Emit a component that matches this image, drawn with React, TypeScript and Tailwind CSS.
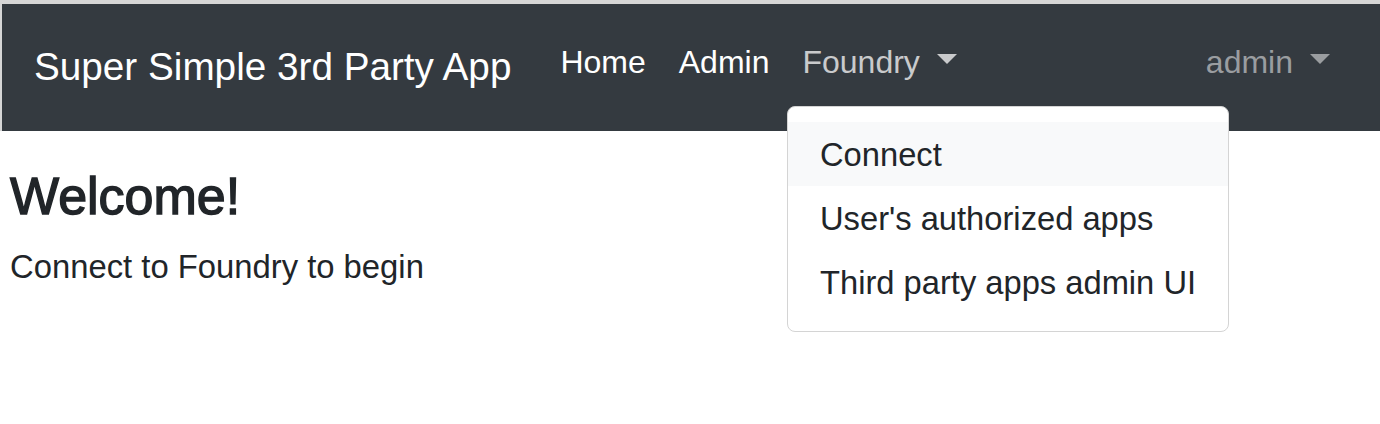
import React from 'react';

const navLinks = [
  { label: 'Home', active: true },
  { label: 'Admin', active: true },
];

const menuItems = ["Connect", "User's authorized apps", "Third party apps admin UI"];

function Caret() {
  return <span className="inline-block w-0 h-0 border-t-[10px] border-x-[10px] border-x-transparent border-t-current ml-[17px] mb-[6px]" />;
}

export default function App() {
  return (
    <div className="w-full h-[424px] bg-white text-[#212529] font-['Liberation_Sans',Arial,sans-serif] relative overflow-hidden">
      {/* Navbar */}
      <nav className="h-[131px] border-t-4 border-l-2 border-[#d6d6d6] bg-[#343a40] flex items-start">
        <a className="ml-[32px] mt-[34px] text-[38.7px] leading-[58px] text-white whitespace-nowrap">
          Super Simple 3rd Party App
        </a>
        <ul className="flex items-center ml-[49px] mt-[34px] gap-[33px]">
          {navLinks.map((link) => (
            <li key={link.label} className="text-[32px] leading-[48px] text-white">{link.label}</li>
          ))}
          <li className="text-[32px] leading-[48px] text-[#c9cacc] flex items-center">
            Foundry
            <Caret />
          </li>
        </ul>
        <div className="ml-auto mr-[50px] mt-[34px] text-[32px] leading-[48px] text-[#9a9da0] flex items-center">
          admin
          <Caret />
        </div>
      </nav>

      {/* Dropdown menu */}
      <div className="absolute left-[787px] top-[106px] w-[442px] bg-white border border-[#d4d4d4] rounded-[8px] pt-[15px] pb-[17px]">
        {menuItems.map((item, idx) => (
          <div
            key={item}
            className={`px-[32px] pt-[9px] pb-[7px] text-[32.7px] leading-[48px] whitespace-nowrap ${idx === 0 ? 'bg-[#f8f9fa]' : ''}`}
          >
            {item}
          </div>
        ))}
      </div>

      {/* Content */}
      <main className="pl-[10px] pt-[34px]">
        <h2 className="text-[52px] leading-[62px] [-webkit-text-stroke:1.4px_#212529]">Welcome!</h2>
        <p className="mt-[16px] text-[32.8px] leading-[48px]">Connect to Foundry to begin</p>
      </main>
    </div>
  );
}
